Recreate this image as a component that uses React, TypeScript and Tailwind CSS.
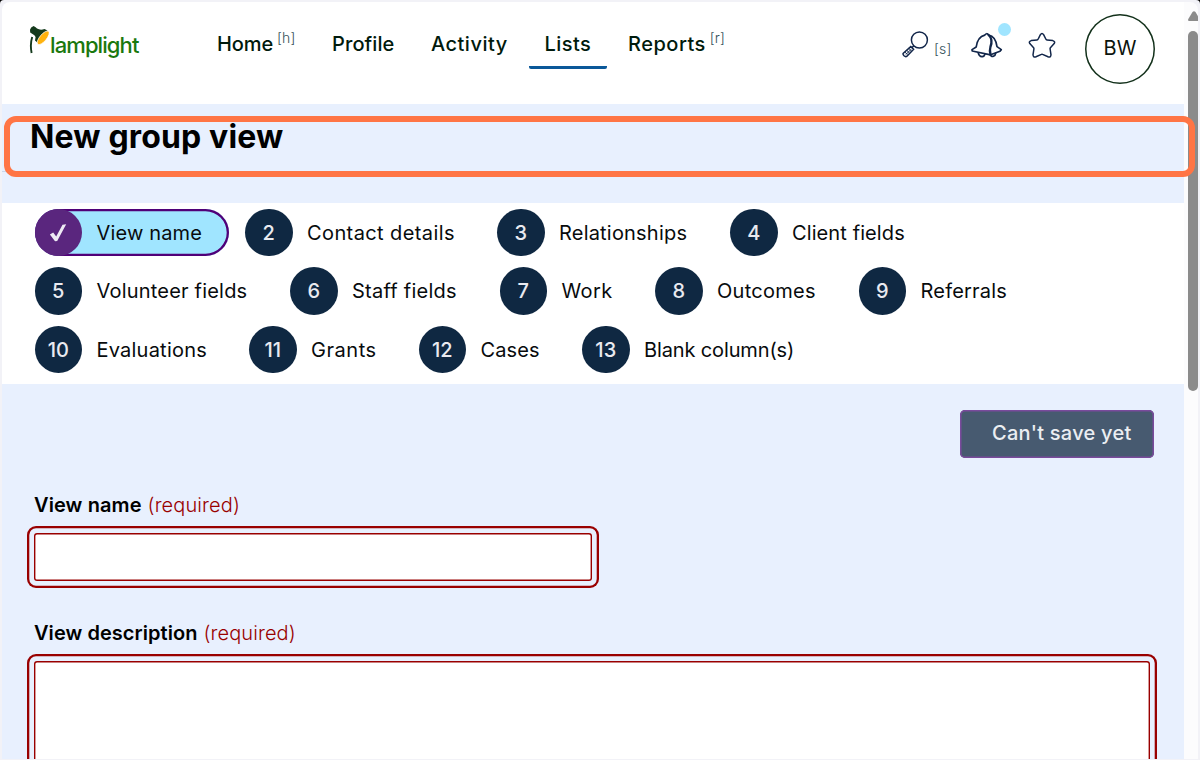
import React from "react";

type Step = { n: string; label: string; box: string; track: string };

const steps: Step[][] = [
  [
    { n: "✓", label: "View name", box: "w-[194.5px]", track: "tracking-[0.15px]" },
    { n: "2", label: "Contact details", box: "w-[236px]", track: "tracking-[0.4px]" },
    { n: "3", label: "Relationships", box: "w-[217px]", track: "tracking-[0.2px]" },
    { n: "4", label: "Client fields", box: "w-[190px]", track: "tracking-[0.1px]" },
  ],
  [
    { n: "5", label: "Volunteer fields", box: "w-[239.5px]", track: "tracking-[0.2px]" },
    { n: "6", label: "Staff fields", box: "w-[193.5px]", track: "tracking-[0.25px]" },
    { n: "7", label: "Work", box: "w-[139.5px]", track: "tracking-[0.4px]" },
    { n: "8", label: "Outcomes", box: "w-[187.5px]", track: "tracking-[0.28px]" },
    { n: "9", label: "Referrals", box: "w-[170px]", track: "tracking-[0.2px]" },
  ],
  [
    { n: "10", label: "Evaluations", box: "w-[198.5px]", track: "tracking-[0.22px]" },
    { n: "11", label: "Grants", box: "w-[153.5px]", track: "tracking-[0.55px]" },
    { n: "12", label: "Cases", box: "w-[147.5px]", track: "tracking-[0.1px]" },
    { n: "13", label: "Blank column(s)", box: "w-[225px]", track: "tracking-[-0.13px]" },
  ],
];

function Logo() {
  return (
    <a className="flex w-[150px] shrink-0 pt-[24px]">
      <svg width="20" height="30" viewBox="0 0 20 30" className="shrink-0">
        <path d="M3.2 11C1.6 16 1.4 21 2.6 27" fill="none" stroke="#143a1c" strokeWidth="1.9" />
        <path d="M1 3.8Q1.6 1 4.6 0Q7 1.2 8 2.6Q11.5 4.6 15.5 3L18.5 4.6L9.4 17.4L6 14.5L6.6 11L5.4 9.2L1.2 6.4Z" fill="#143a1c" />
        <ellipse cx="14.2" cy="11.8" rx="8.4" ry="3.4" transform="rotate(-50 14.2 11.8)" fill="#ffb30f" stroke="#fff" strokeWidth="0.7" />
      </svg>
      <span className="pt-[5px] pl-[1px] text-[22px] leading-[28px] font-medium tracking-[-0.9px] text-[#1a780d]">lamplight</span>
    </a>
  );
}

function NavItem({ label, hint, box, track, active }: { label: string; hint?: string; box: string; track: string; active?: boolean }) {
  return (
    <a className={`flex h-[36px] shrink-0 whitespace-nowrap text-[20px] leading-[22px] font-medium text-[#001a0c] ${box} ${track} ${active ? "rounded-b-[2px] border-b-[3px] border-[#0a5899] pl-[16px]" : ""}`}>
      {label}
      {hint && <span className="-mt-[6px] ml-[4px] text-[14px] leading-[22px] font-light tracking-[0.1px] text-[#35515a]">{hint}</span>}
    </a>
  );
}

function Search() {
  return (
    <svg width="28" height="28" viewBox="0 0 28 28" fill="none" stroke="#12264a" strokeWidth="1.5">
      <circle cx="17.4" cy="10" r="8" />
      <path d="M11.8 15.8L10.2 17.6M8.8 16.6L11.6 19.2L5 26.2Q3.6 27.2 2 25.8Q.5 24.2 1.3 23.2Z" />
      <path d="M9 19.4L4 24.4M3 22.2L5.5 24.6M4.8 20.4L7.3 22.8M6.8 18.4L9.3 20.8" strokeWidth="1" />
    </svg>
  );
}

function Bell() {
  return (
    <svg width="34" height="30" viewBox="0 0 34 30" fill="none" stroke="#12264a" strokeWidth="1.7" strokeLinejoin="round" strokeLinecap="round">
      <path d="M14.8 5.1Q16.7 2.4 18.6 5C24 6 26.2 10.5 27 16.6L31.3 19.6L30 21.2L20.5 24.8L2.2 21L2 19.6L6.2 17C7 10.8 9.3 6.4 14.8 5.1Z" />
      <path d="M18.6 5C22.8 8.8 21.9 13 20.4 17Q19.4 20 20.5 24.8" strokeWidth="2.3" />
      <path d="M8.2 22.8Q9.3 27 12.4 26.6Q14.3 26.3 15 24.2M20.5 24.8Q21 27 23.5 26.3Q25.4 25.7 25.7 23.2" />
    </svg>
  );
}

function Star() {
  return (
    <svg width="28" height="30" viewBox="0 0 28 30" fill="none" stroke="#12264a" strokeWidth="1.5" strokeLinejoin="round" className="-mt-[1px]">
      <path d="M12.4 5.6Q14 3.2 15.6 5.6L17.8 10Q18.2 10.8 19 10.9L24.8 11.6Q27.6 12.6 26.2 14.6L22.4 18.8Q22 19.3 22.1 20L23 25.8Q22.8 28.9 20 27.8L14.6 25.4Q14 25.1 13.4 25.4L8 27.8Q5.2 28.9 5 25.8L5.9 20Q6 19.3 5.6 18.8L1.8 14.6Q.4 12.6 3.2 11.6L9 10.9Q9.8 10.8 10.2 10Z" />
    </svg>
  );
}

function StepPill({ step, active }: { step: Step; active: boolean }) {
  return (
    <li className={`flex h-[47.5px] shrink-0 items-center rounded-full ${step.box} ${active ? "bg-[#a0e5ff] shadow-[inset_0_0_0_2.3px_#500078]" : ""}`}>
      <span className={`flex size-[47.5px] shrink-0 items-center justify-center rounded-full text-[20px] font-medium text-[#e9eaf0] ${active ? "bg-[#5a267e]" : "bg-[#0f2842]"}`}>
        {active ? (
          <svg width="18" height="20" viewBox="0 0 18 20">
            <path d="M.9 11.4L4.2 9.6L7.2 13.4L13.5 1.8L17.2 1.2L8.2 18L6 18.3Z" fill="#eeeaf4" />
          </svg>
        ) : (
          step.n
        )}
      </span>
      <span className={`ml-[14.5px] whitespace-nowrap text-[20px] leading-[28px] font-[370] text-[#080b0d] ${step.track}`}>{step.label}</span>
    </li>
  );
}

function FieldLabel({ text, track }: { text: string; track: string }) {
  return (
    <label className="flex h-[28px] items-center gap-[6px] pl-[7.5px] text-[20px] leading-[28px] whitespace-nowrap">
      <span className={`font-semibold text-black ${track}`}>{text}</span>
      <span className="font-light tracking-[0.1px] text-[#990000]">(required)</span>
    </label>
  );
}

export default function App() {
  return (
    <div className="h-[760px] w-[1200px] overflow-hidden bg-black font-['Inter','Liberation_Sans',sans-serif]">
      <div className="relative flex h-full w-full overflow-hidden rounded-t-[4px] bg-[#f2f2f7] pt-[2px] pr-[2px] pb-px pl-[2px]">
        <div className="flex min-w-0 flex-1 justify-between overflow-hidden rounded-t-[8px] bg-[#fcfcfd]">
          <main className="flex w-[1181.5px] shrink-0 flex-col overflow-hidden bg-[#e8f0fe]">
            <header className="flex h-[102px] shrink-0 bg-white pl-[27px]">
              <Logo />
              <nav className="ml-[38px] flex w-[685px] shrink-0 pt-[31px]">
                <NavItem label="Home" hint="[h]" box="w-[115px]" track="tracking-[-0.1px]" />
                <NavItem label="Profile" box="w-[99px]" track="tracking-[0.1px]" />
                <NavItem label="Activity" box="w-[97.5px]" track="tracking-[0.5px]" />
                <NavItem label="Lists" box="w-[78.5px]" track="tracking-[0.45px]" active />
                <span className="w-[21px]" />
                <NavItem label="Reports" hint="[r]" box="w-[110px]" track="tracking-[0.5px]" />
              </nav>
              <div className="flex w-[183px] shrink-0 pt-[28px]">
                <Search />
                <span className="mt-[9px] ml-[4px] w-[36px] text-[14px] leading-[20px] font-light tracking-[0.2px] text-[#35515a]">[s]</span>
                <span className="relative w-[58px]">
                  <Bell />
                  <i className="absolute -top-[7.5px] left-[27.5px] size-[13.5px] rounded-full bg-[#a0e5ff]" />
                </span>
                <Star />
              </div>
              <div className="mt-[12px] flex size-[70px] shrink-0 items-center justify-center rounded-full pb-[2px] text-[20px] font-[370] text-[#0b140d] shadow-[inset_0_0_0_1.5px_#12301a]">BW</div>
            </header>

            <section className="flex h-[99.4px] shrink-0 flex-col pl-[28px]">
              <h1 className="mt-[12px] text-[32px] leading-[42px] font-bold tracking-[0.15px] whitespace-nowrap text-black">New group view</h1>
              <div className="mt-[13px] -ml-[28px] h-px bg-[#cbd6e8]" />
            </section>

            <ol className="flex h-[180.6px] shrink-0 flex-col gap-[11px] bg-white pt-[5.6px] pl-[32.5px]">
              {steps.map((row, r) => (
                <li key={r}>
                  <ul className="flex gap-4">
                    {row.map((s) => (
                      <StepPill key={s.n} step={s} active={s.n === "✓"} />
                    ))}
                  </ul>
                </li>
              ))}
            </ol>

            <section className="flex min-h-0 flex-1 flex-col pr-[26.5px] pl-[24.5px]">
              <button className="mt-[26px] mr-[3px] flex h-[48px] w-[194px] shrink-0 justify-start self-end rounded-[5px] bg-[#475a70] pt-[9px] pl-[32px] text-[20px] leading-[28px] font-medium tracking-[0.25px] whitespace-nowrap text-[#ebeef2] shadow-[inset_0_0_0_1.5px_#7a4a9c]">Can't save yet</button>
              <div className="mt-[33px] shrink-0">
                <FieldLabel text="View name" track="tracking-[0.1px]" />
                <div className="mt-[7px] h-[62px] w-[572px] rounded-[9px] p-[7px] shadow-[inset_0_0_0_2.3px_#990000]">
                  <input className="block h-full w-full rounded-[3px] bg-white shadow-[inset_0_0_0_1.4px_#990000] outline-none" />
                </div>
              </div>
              <div className="mt-[31px] shrink-0">
                <FieldLabel text="View description" track="tracking-[0.05px]" />
                <div className="mt-[7px] h-[140px] rounded-[9px] p-[7px] shadow-[inset_0_0_0_2.3px_#990000]">
                  <textarea className="block h-full w-full resize-none rounded-[3px] bg-white shadow-[inset_0_0_0_1.4px_#990000] outline-none" />
                </div>
              </div>
            </section>
          </main>
          <aside className="flex w-[14px] shrink-0 flex-col items-end overflow-hidden pt-[9px]">
            <svg width="10" height="10" viewBox="0 0 10 10">
              <path d="M0 8.5L4.5 1Q6 -.5 7.5 1L12 8.5Q12 10 10 10H1Q0 10 0 8.5Z" fill="#8b8b8b" />
            </svg>
            <div className="mt-[10px] h-[360px] w-[10px] rounded-[5px] bg-[#8b8b8b]" />
          </aside>
        </div>
        <div className="absolute top-[116px] left-[4px] h-[61px] w-[1191px] rounded-[12px] border-[6px] border-[#ff7545]" />
      </div>
    </div>
  );
}
